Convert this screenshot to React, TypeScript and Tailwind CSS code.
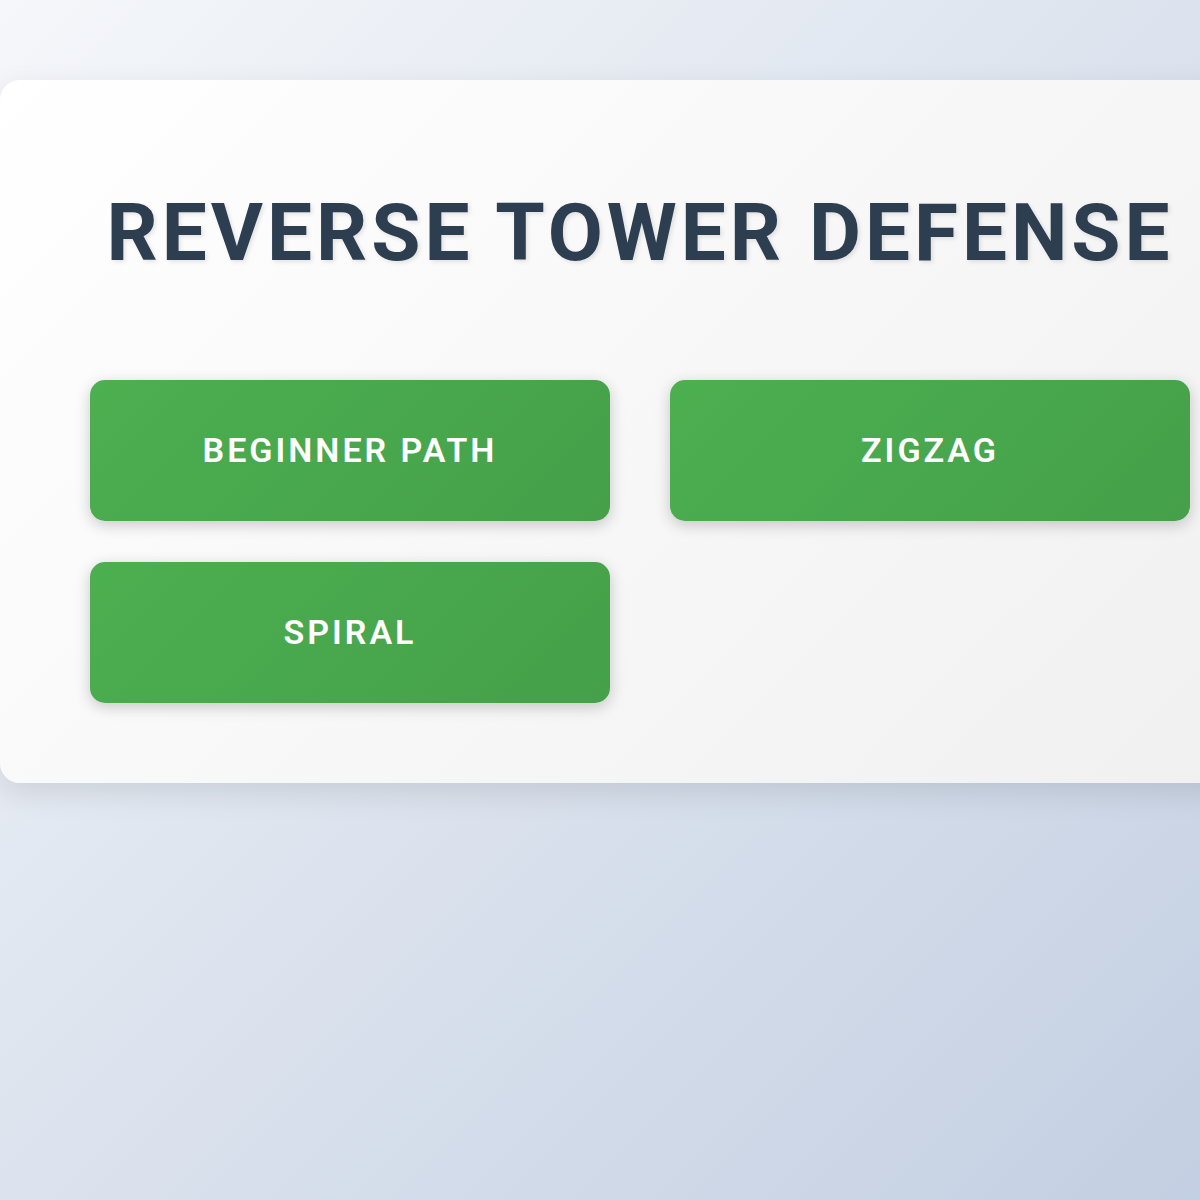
import React from "react";

export default function App() {
  const levels = ["BEGINNER PATH", "ZIGZAG", "SPIRAL"];
  return (
    <div
      className="w-[1200px] h-[1200px] overflow-hidden bg-[linear-gradient(135deg,#f5f7fa_0%,#c3cfe2_100%)] pt-[80px]"
      style={{ fontFamily: "Roboto, 'Liberation Sans', sans-serif" }}
    >
      <div className="w-[1280px] rounded-[20px] bg-[linear-gradient(135deg,#ffffff_0%,#f0f0f0_100%)] shadow-[0_10px_30px_rgba(0,0,0,0.1)] px-[90px] pt-[105px] pb-[80px]">
        <h1 className="text-center text-[80px] leading-[1.2] font-bold tracking-[4px] text-[#2c3e50] [text-shadow:2px_2px_4px_rgba(0,0,0,0.1)]">
          REVERSE TOWER DEFENSE
        </h1>
        <div className="mt-[99px] grid grid-cols-2 gap-x-[60px] gap-y-[41px]">
          {levels.map((l) => (
            <button
              key={l}
              className="h-[141px] rounded-[15px] bg-[linear-gradient(135deg,#4caf50_0%,#45a049_100%)] shadow-[0_4px_15px_rgba(0,0,0,0.2)] text-white text-[34px] font-semibold tracking-[3px]"
            >
              {l}
            </button>
          ))}
        </div>
      </div>
    </div>
  );
}
